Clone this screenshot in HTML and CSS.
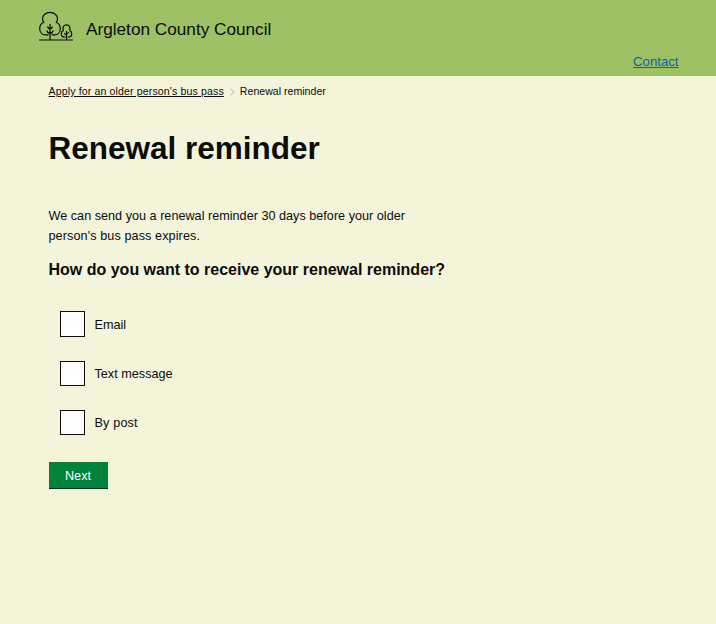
FILE: index.html
```html
<!DOCTYPE html>
<html lang="en">
<head>
<meta charset="utf-8">
<title>Renewal reminder</title>
<link rel="stylesheet" href="styles.css">
</head>
<body>
<header class="header">
  <a class="brand">
    <svg class="logo" viewBox="0 0 36 32" width="36" height="32" fill="none" stroke="#0b0c0c" stroke-width="1.2">
      <path d="M1 30H35M12 30V14M9.500 16.500C10 18.200 11 18.700 12 18.800C13 18.700 14 18.200 14.500 16.500M8.800 20.500C9.300 22.500 11 23.200 12 23.300C13 23.200 14.700 22.500 15.200 20.500"/>
      <path d="M10.500 24.800H7.500C4 24.800 1.700 22.300 1.700 18.700C1.700 15.500 3.200 13.300 5.700 12.200C4.900 11.200 4.500 10 4.500 8.800C4.500 5 7.800 2.400 12 2.400S19.500 5 19.500 8.800C19.500 10 19.100 11.200 18.300 12.200C20.800 13.300 22.300 15.500 22.300 18.700C22.300 22.300 20 24.800 16.500 24.800H13.500"/>
      <path d="M28.500 30V21M26.500 23C26.800 24.500 28 25 28.500 25M30.500 22C30.200 23.500 29 24 28.500 24M27.500 27H26.500C24.500 27 23.300 25.500 23.300 23.700C23.300 22.200 24 21.200 25.200 20.500C24.500 17.500 25.500 14.800 28.500 14.800S32.500 17.500 31.800 20.500C33 21.200 33.700 22.200 33.700 23.700C33.700 25.500 32.500 27 30.500 27H29.500"/>
    </svg>
    <span class="brand-name">Argleton County Council</span>
  </a>
  <nav class="nav"><a href="#">Contact</a></nav>
</header>
<main class="main">
  <nav class="crumbs">
    <a href="#">Apply for an older person's bus pass</a>
    <svg class="chevron" width="5" height="8" viewBox="0 0 5 8" fill="none" stroke="#b1b4b6" stroke-width="1"><path d="M.7.7L4 4L.7 7.300"/></svg>
    <span>Renewal reminder</span>
  </nav>
  <h1 class="title">Renewal reminder</h1>
  <p class="intro">We can send you a renewal reminder 30 days before your older<br><span class="intro-end">person's bus pass expires.</span></p>
  <h2 class="question">How do you want to receive your renewal reminder?</h2>
  <form class="form">
    <label class="option first"><input class="box" type="checkbox"><span>Email</span></label>
    <label class="option"><input class="box" type="checkbox"><span>Text message</span></label>
    <label class="option"><input class="box" type="checkbox"><span class="post">By post</span></label>
    <button class="next" type="button">Next</button>
  </form>
</main>
</body>
</html>
```
FILE: styles.css
```css
* { box-sizing: border-box; }
body { margin: 0; min-height: 100vh; background: #f4f4db; color: #0b0c0c; font: 12.67px/20px "Liberation Sans", Arial, sans-serif; }
.header { height: 76px; padding: 10px 37.500px 0 38px; background: #9dc164; }
.brand { display: flex; height: 38px; }
.logo { flex: none; }
.brand-name { margin-left: 12px; padding-top: 9px; font-size: 17.200px; }
.nav { display: flex; justify-content: flex-end; height: 28px; padding-top: 4px; font-size: 13.200px; }
.nav a { color: #0b62ad; }
.main { padding: 9px 48.500px 0; }
.crumbs { display: flex; align-items: center; height: 13px; font-size: 10.600px; line-height: 13px; }
.crumbs a { color: inherit; letter-spacing: 0.120px; }
.chevron { margin: 0 5px 0 6px; }
.title { margin: 30px 0 0; font-size: 31.500px; line-height: 40px; }
.intro { margin: 38px 0 0; }
.intro-end { letter-spacing: 0.080px; }
.question { margin: 14px 0 0; font-size: 16px; line-height: 20px; }
.form { margin: 31px 0 0; }
.option { display: flex; align-items: center; gap: 9.500px; height: 25px; margin: 0 0 24px 11.500px; }
.first { height: 26px; }
.first span { padding-top: 2px; }
.post { letter-spacing: 0.150px; }
.box { appearance: none; flex: none; width: 25px; height: 100%; margin: 0; border: 1px solid #0b0c0c; background: #fff; }
.next { display: block; width: 59px; height: 27px; margin: 27px 0 0; padding: 0; border: 0; background: #00823b; color: #fff; font: inherit; box-shadow: inset 0 -1px #002d18; }
```
